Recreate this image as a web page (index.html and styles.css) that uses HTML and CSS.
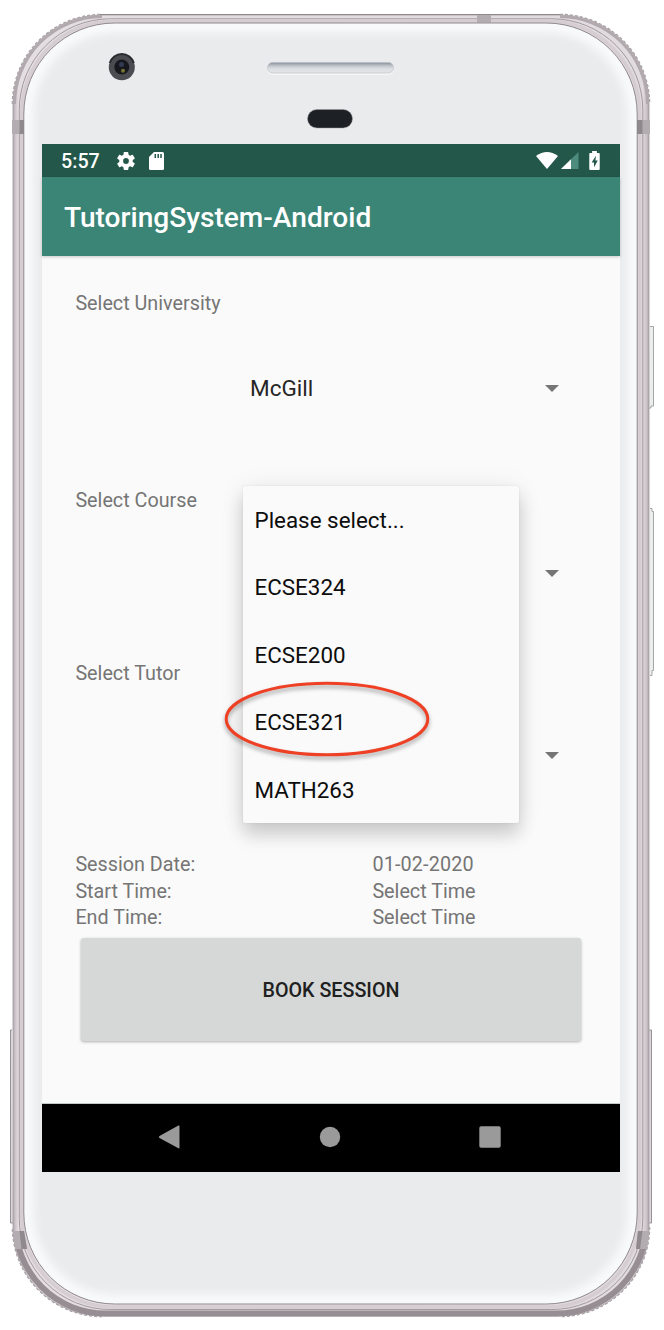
FILE: index.html
```html
<!DOCTYPE html>
<html lang="en">
<head>
<meta charset="utf-8">
<title>TutoringSystem-Android</title>
<link rel="stylesheet" href="styles.css">
</head>
<body>
<div class="device">
  <svg class="device-shell" viewBox="0 0 664 1330" aria-hidden="true">
    <defs>
      <linearGradient id="metal" x1="0" x2="1" y1="0" y2="0">
        <stop offset="0" stop-color="#a59ea2"/><stop offset=".003" stop-color="#c9c1c5"/><stop offset=".009" stop-color="#e4dde1"/>
        <stop offset=".99" stop-color="#e1dade"/><stop offset=".997" stop-color="#c8c0c5"/><stop offset="1" stop-color="#9b9498"/>
      </linearGradient>
      <linearGradient id="speaker" x1="0" x2="0" y1="0" y2="1">
        <stop offset="0" stop-color="#89929a"/><stop offset=".35" stop-color="#c4c9ce"/><stop offset=".6" stop-color="#dcdfe3"/><stop offset="1" stop-color="#e2e4e6"/>
      </linearGradient>
      <filter id="soft" x="-5%" y="-5%" width="110%" height="110%"><feGaussianBlur stdDeviation="4"/></filter>
      <clipPath id="face"><rect x="24" y="23" width="613" height="1281" rx="91"/></clipPath>
      <clipPath id="base"><rect x="0" y="1245" width="664" height="85"/></clipPath>
    </defs>
    <g class="side-buttons">
      <path d="M650 326.500h3.500v79.500h-2.500v2h-2"/>
      <path d="M650 508.500h2v3h1.500v159h-1.500v5h-2"/>
    </g>
    <path class="foot" d="M12 1030H10.500V1223H13M649 1030H651.500V1223H649"/>
    <path class="scallops" d="M12.700 104A89.500 89.500 0 0 1 102 14.700M560 14.700A89.500 89.500 0 0 1 649.300 104M649.300 1227A89.500 89.500 0 0 1 560 1316.300M102 1316.300A89.500 89.500 0 0 1 12.700 1227"/>
    <rect x="13" y="15" width="636" height="1301" rx="89" fill="url(#metal)" stroke="#b1aaae"/>
    <path class="top-edge" d="M100 14.500H560"/>
    <g clip-path="url(#base)">
      <rect class="base-rim" x="15.500" y="17" width="631" height="1296.500" rx="90"/>
    </g>
    <path class="corner-rim" d="M14.500 104A88 88 0 0 1 102 16.500M560 16.500A88 88 0 0 1 647.500 104"/>
    <rect class="seam" x="19.300" y="18.800" width="623.500" height="1290.700" rx="91"/>
    <rect class="inner-metal" x="21.700" y="21" width="618" height="1286" rx="92"/>
    <g class="antenna">
      <rect x="12" y="120" width="12" height="14"/><rect x="637" y="120" width="13" height="14"/>
      <rect x="477" y="15" width="14" height="7.500"/>
      <path d="M12.500 1231H24l3 18H15zM638 1231h11.500l-2.500 18h-11z"/>
    </g>
    <path class="antenna-shade" d="M19.500 120H24V134H19.500zM637 120H642.500V134H637zM19.500 1231H24l3 18H21.500zM638 1231h4.500l-2.500 18h-4z"/>
    <rect class="face" x="24" y="23.300" width="613" height="1280.700" rx="91"/>
    <g clip-path="url(#face)"><rect class="face-glow" x="26" y="25" width="609" height="1277" rx="90" filter="url(#soft)"/></g>
    <rect class="face-edge" x="23.800" y="23" width="613.400" height="1281" rx="91"/>
    <g>
      <circle cx="121.800" cy="67.200" r="13" fill="#4b4c52"/>
      <path d="M109.800 63A12.500 12.500 0 0 1 133.800 63" fill="none" stroke="#292a2e" stroke-width="2"/>
      <circle cx="121.800" cy="67" r="7.500" fill="#16181d"/>
      <circle cx="121.500" cy="64.500" r="2.500" fill="#333a53"/>
      <circle cx="123" cy="70.800" r="2" fill="#777333"/>
    </g>
    <rect x="267" y="62.500" width="127" height="12.500" rx="6" fill="#f5f6f6"/>
    <rect x="267.500" y="62.500" width="126" height="10.500" rx="5" fill="url(#speaker)" stroke="#b8bec4" stroke-width=".6"/>
    <rect x="307.500" y="109.500" width="45" height="18.500" rx="9.250" fill="#1d2025" stroke="#96999d" stroke-width=".5"/>
  </svg>

  <main class="screen">
    <header class="status-bar">
      <span class="clock">5:57</span>
      <svg class="gear" viewBox="2 2 20 20"><path fill="#fff" d="M19.430 12.980c.04-.32.070-.64.070-.98s-.03-.66-.07-.98l2.110-1.650c.19-.15.240-.42.120-.64l-2-3.460c-.12-.22-.39-.3-.61-.22l-2.490 1c-.52-.4-1.080-.73-1.690-.98l-.38-2.650A.49.49 0 0 0 14 2h-4c-.25 0-.46.180-.49.420l-.38 2.650c-.61.250-1.170.590-1.690.980l-2.490-1c-.23-.09-.49 0-.61.220l-2 3.460c-.13.220-.07.490.120.640l2.110 1.650c-.04.320-.07.650-.07.980s.03.660.070.980l-2.110 1.650c-.19.150-.24.420-.12.640l2 3.460c.12.220.390.300.610.220l2.490-1c.52.400 1.080.730 1.690.980l.38 2.650c.03.240.240.420.490.420h4c.25 0 .46-.18.490-.42l.38-2.650c.61-.25 1.170-.59 1.690-.98l2.490 1c.23.090.49 0 .61-.22l2-3.460c.12-.22.070-.49-.12-.64zM12 15.200a3.200 3.200 0 1 1 0-6.400 3.200 3.200 0 0 1 0 6.400z"/></svg>
      <svg class="sd" viewBox="0 0 15 18"><path fill="#fff" d="M5 0H13.500Q15 0 15 1.500V16.500Q15 18 13.500 18H1.500Q0 18 0 16.500V5z"/><path stroke="#23574a" stroke-width="1.500" d="M6.300 2v4M9.200 2v4M12 2v4"/></svg>
      <span class="spacer"></span>
      <svg class="wifi" viewBox="0 0 22 17"><path fill="#fff" d="M0 4Q11-4 22 4L11 17z"/></svg>
      <svg class="cell" viewBox="0 0 18 17"><path fill="#4d8b7e" d="M0 17L17.500 0V17z"/><path fill="#fff" d="M0 17L10 7.300V17z"/></svg>
      <svg class="battery" viewBox="0 0 11 20"><path fill="#fff" d="M3 0h5v2h2q1 0 1 1v16q0 1-1 1H1q-1 0-1-1V3q0-1 1-1h2z"/><path fill="#23574a" d="M7 5L2.500 12H5v5l4-7H6.500z"/></svg>
    </header>
    <h1 class="app-bar">TutoringSystem-Android</h1>

    <section class="form">
      <div class="field field-university">
        <label class="label">Select University</label>
        <div class="spinner"><span class="value">McGill</span><i class="caret"></i></div>
      </div>
      <div class="field field-course">
        <label class="label">Select Course</label>
        <div class="spinner"><i class="caret"></i></div>
        <div class="menu">
          <div class="option">Please select...</div>
          <div class="option">ECSE324</div>
          <div class="option">ECSE200</div>
          <div class="option">ECSE321<svg class="circle-mark" viewBox="0 0 210 82"><ellipse cx="104" cy="38" rx="100.800" ry="35.700"/></svg></div>
          <div class="option">MATH263</div>
        </div>
      </div>
      <div class="field field-tutor">
        <label class="label">Select Tutor</label>
        <div class="spinner"><i class="caret"></i></div>
      </div>
      <div class="details">
        <span>Session Date:</span><span class="date">01-02-2020</span>
        <span>Start Time:</span><span>Select Time</span>
        <span>End Time:</span><span>Select Time</span>
      </div>
      <button class="book">BOOK SESSION</button>
    </section>

    <nav class="nav-bar">
      <svg viewBox="0 0 24 24"><path fill="#9a9a9a" d="M1.500 11.100L20.400.6Q21.500 0 21.500 1.300V22.500Q21.500 23.800 20.400 23.200L1.500 12.900Q0 12 1.500 11.100z"/></svg>
      <svg viewBox="0 0 24 24"><circle cx="12" cy="12" r="10.200" fill="#9a9a9a"/></svg>
      <svg viewBox="0 0 24 24"><rect x="1.300" y="1.300" width="21.400" height="21.400" rx="1.800" fill="#9a9a9a"/></svg>
    </nav>
  </main>
</div>
</body>
</html>
```
FILE: styles.css
```css
* { box-sizing: border-box; }
body { margin: 0; background: #fff; font-family: Roboto, "Liberation Sans", sans-serif; }
svg { display: block; flex: none; }

.device { position: relative; width: 664px; height: 1330px; padding: 144px 44px 158px 42px; overflow: hidden; }
.device-shell { position: absolute; inset: 0; width: 664px; height: 1330px; }
.side-buttons path { fill: #eceeed; stroke: #a5a7a6; stroke-width: 1; }
.foot { fill: #ddd6da; stroke: #989296; }
.scallops { fill: none; stroke: #a8a2a6; stroke-width: 2; stroke-dasharray: 3 2; }
.top-edge { stroke: #8f888c; }
.base-rim { fill: none; stroke: #968e93; stroke-width: 6; }
.corner-rim { fill: none; stroke: #b1a9ae; stroke-width: 3; }
.seam { fill: none; stroke: #a19a9e; stroke-width: 1; }
.inner-metal { fill: none; stroke: #d5cdd1; stroke-width: 3.500; }
.antenna { fill: #b3acb0; }
.antenna-shade { fill: #8f888c; }
.face { fill: #eaebed; }
.face-glow { fill: none; stroke: #f9fafb; stroke-width: 15; }
.face-edge { fill: none; stroke: #8f898d; stroke-width: 1; }

.screen { position: relative; display: flex; flex-direction: column; width: 578px; height: 1028px; background: #fafafa; }
.status-bar { display: flex; align-items: center; height: 33px; flex: none; padding: 0 20px 0 19px; background: #23574a; color: #fff; }
.clock { width: 56px; font-size: 19.700px; font-weight: 500; line-height: 33px; padding-top: 1px; }
.gear { width: 18px; height: 18px; }
.sd { width: 15px; height: 18px; margin-left: 14px; }
.spacer { flex: 1; }
.wifi { width: 22px; height: 17px; margin-right: 3px; }
.cell { width: 18px; height: 17px; margin-right: 10px; }
.battery { width: 11px; height: 19px; }
.app-bar { z-index: 1; margin: 0; height: 79px; flex: none; padding-left: 22px; background: #3a8576; color: #fff; font-size: 28.100px; font-weight: 500; line-height: 81px; box-shadow: 0 1px 3px rgba(0,0,0,.2); }

.form { display: flex; flex-direction: column; flex: 1; padding: 35px 33px 0; border-bottom: 1px solid #c4cbc8; color: #757575; font-size: 19.750px; }
.field { position: relative; flex: none; }
.field-university { height: 197px; }
.field-course { height: 173px; }
.field-tutor { height: 191px; }
.label { display: block; height: 26px; padding-left: .4px; line-height: 26px; }
.spinner { display: flex; align-items: center; height: 32px; padding: 0 28px 0 175px; color: #262626; font-size: 22.500px; }
.field-university .spinner { margin-top: 55px; }
.field-course .spinner { margin-top: 43px; }
.field-tutor .spinner { margin-top: 52px; }
.caret { margin-left: auto; border: 7px solid transparent; border-top-color: #757575; border-bottom: 0; }
.menu { position: absolute; z-index: 2; left: 168px; top: -2px; width: 275.500px; border-radius: 2px; background: #fafafa; color: #0d0d0d; font-size: 22.400px; box-shadow: 0 0 2px rgba(0,0,0,.1), 0 12px 18px rgba(0,0,0,.16), 0 2px 26px rgba(0,0,0,.08); }
.option { position: relative; height: 67.400px; padding-left: 11.500px; line-height: 69px; }
.circle-mark { position: absolute; left: -20px; top: -7px; width: 210px; height: 82px; overflow: visible; filter: drop-shadow(0 3px 2px rgba(0,0,0,.35)); }
.circle-mark ellipse { fill: none; stroke: #ee4025; stroke-width: 3; }
.details { display: grid; grid-template-columns: 297px 1fr; grid-auto-rows: 26.500px; flex: none; padding-left: .4px; line-height: 26.500px; }
.date { letter-spacing: .16px; }
.book { width: 500px; height: 103px; margin: 6px 0 0 6px; padding: 2px 0 0; flex: none; border: 0; border-radius: 3px; background: #d6d8d7; color: #202020; font: 500 19.700px Roboto, sans-serif; box-shadow: 0 1px 3px rgba(0,0,0,.3); }

.nav-bar { display: flex; align-items: center; justify-content: space-between; height: 68px; flex: none; padding: 0 118px 2px 116px; background: #000; }
.nav-bar svg { width: 24px; height: 24px; }
```
